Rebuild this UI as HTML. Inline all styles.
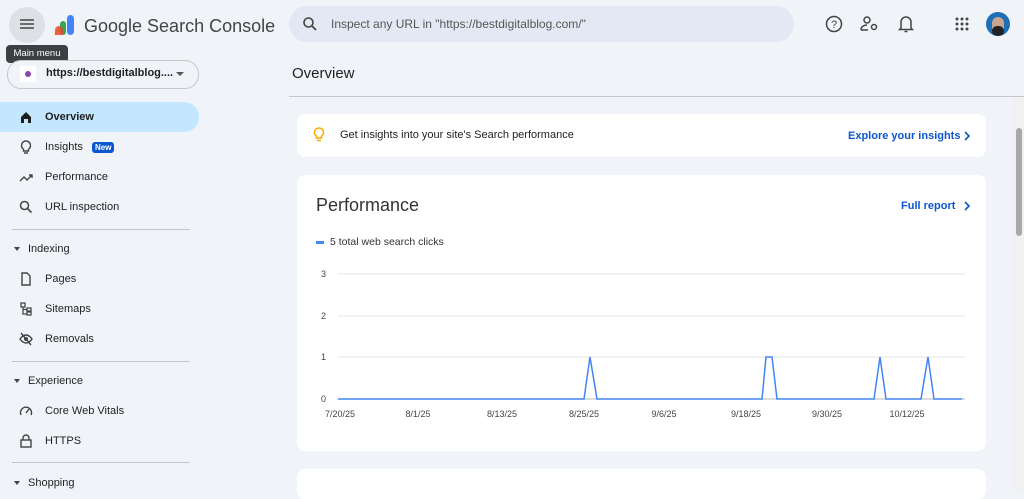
<!DOCTYPE html><html><head><style>
body{margin:0;width:1024px;height:490px;overflow:hidden;background:#f0f4f9;font-family:"Liberation Sans",sans-serif;position:relative;color:#1f1f1f}
.a{position:absolute}
.nav{position:absolute;left:0;width:199px;height:30px;font-size:11px;display:flex;align-items:center}
.nav span.t{position:absolute;left:45px}
.nav svg{position:absolute;left:19px}
.sec{position:absolute;left:14px;font-size:11px;display:flex;align-items:center}
.hr{position:absolute;left:12px;width:178px;height:1px;background:#c4c7c5}
.card{position:absolute;background:#fff;border-radius:8px}
</style></head><body>
<div class="a" style="left:9px;top:7px;width:36px;height:36px;border-radius:50%;background:#dde1e6"></div>
<svg class="a" style="left:19px;top:18px" width="16" height="12"><path d="M1 2h14M1 6h14M1 10h14" stroke="#444" stroke-width="1.6"/></svg>
<svg class="a" style="left:52px;top:13px" width="26" height="24"><path d="M2 22 L6 14 L12 18 Z" fill="#fbbc04"/><rect x="8" y="8" width="6" height="14" rx="3" fill="#34a853"/><rect x="15" y="2" width="7" height="20" rx="3.5" fill="#4285f4"/><path d="M3 17a4 4 0 0 1 8 0v5H3z" fill="#ea4335" opacity=".8"/></svg>
<div class="a" style="left:84px;top:16px;font-size:18px;color:#444">Google Search Console</div>
<div class="a" style="left:6px;top:45px;width:62px;height:18px;background:#3c4043;border-radius:4px;color:#fff;font-size:9.5px;line-height:18px;text-align:center">Main menu</div>
<div class="a" style="left:7px;top:60px;width:190px;height:27px;border:1px solid #c4c7c5;border-radius:14px;background:#f0f4f9"></div>
<div class="a" style="left:20px;top:66px;width:16px;height:16px;background:#fff"></div>
<div class="a" style="left:25px;top:71px;width:6px;height:6px;border-radius:50%;background:#8e44ad"></div>
<div class="a" style="left:46px;top:67px;font-size:11px;font-weight:bold;color:#1f1f1f">https://bestdigitalblog....</div>
<div class="a" style="left:176px;top:72px;border:4px solid transparent;border-top:4px solid #555;border-bottom:0"></div>
<div class="a" style="left:289px;top:6px;width:505px;height:36px;border-radius:18px;background:#e3e9f4"></div>
<svg class="a" style="left:302px;top:16px" width="16" height="16"><circle cx="6.5" cy="6.5" r="4.5" stroke="#444" stroke-width="1.6" fill="none"/><path d="M10 10l4 4" stroke="#444" stroke-width="1.8"/></svg>
<div class="a" style="left:331px;top:17px;font-size:12px;color:#555">Inspect any URL in "https://bestdigitalblog.com/"</div>
<svg class="a" style="left:825px;top:15px" width="18" height="18"><circle cx="9" cy="9" r="7.5" stroke="#444" stroke-width="1.5" fill="none"/><text x="9" y="13" font-size="11" text-anchor="middle" fill="#444" font-family="Liberation Sans">?</text></svg>
<svg class="a" style="left:860px;top:15px" width="20" height="18"><circle cx="7" cy="5" r="3" stroke="#444" stroke-width="1.5" fill="none"/><path d="M1 15c0-4 4-5 6-5" stroke="#444" stroke-width="1.5" fill="none"/><path d="M1 15h7" stroke="#444" stroke-width="1.5"/><circle cx="14" cy="12" r="2.5" stroke="#444" stroke-width="1.5" fill="none"/></svg>
<svg class="a" style="left:898px;top:14px" width="16" height="20"><path d="M3 14V8a5 5 0 0 1 10 0v6l1.5 1.5h-13z" stroke="#444" stroke-width="1.5" fill="none"/><path d="M6.5 17.5h3" stroke="#444" stroke-width="1.5"/></svg>
<svg class="a" style="left:955px;top:17px" width="14" height="14"><g fill="#444"><circle cx="2" cy="2" r="1.5"/><circle cx="7" cy="2" r="1.5"/><circle cx="12" cy="2" r="1.5"/><circle cx="2" cy="7" r="1.5"/><circle cx="7" cy="7" r="1.5"/><circle cx="12" cy="7" r="1.5"/><circle cx="2" cy="12" r="1.5"/><circle cx="7" cy="12" r="1.5"/><circle cx="12" cy="12" r="1.5"/></g></svg>
<div class="a" style="left:986px;top:12px;width:24px;height:24px;border-radius:50%;background:#1d6fb8;overflow:hidden"><div class="a" style="left:6px;top:5px;width:12px;height:16px;border-radius:6px;background:#c9a48f"></div><div class="a" style="left:6px;top:14px;width:12px;height:10px;border-radius:5px;background:#222"></div></div>

<div class="a" style="left:0;top:102px;width:199px;height:30px;background:#c2e7ff;border-radius:0 15px 15px 0"></div>
<div class="nav" style="top:102px"><svg width="14" height="14"><path d="M2 7L7 2l5 5v6H9V9H5v4H2z" fill="#1f1f1f"/></svg><span class="t" style="font-weight:bold">Overview</span></div>
<div class="nav" style="top:132px"><svg width="14" height="14"><path d="M7 1a4.5 4.5 0 0 0-2.5 8.2V11h5V9.2A4.5 4.5 0 0 0 7 1zM5 13h4" stroke="#444" stroke-width="1.4" fill="none"/></svg><span class="t">Insights</span><span class="a" style="left:92px;top:10px;background:#0b57d0;color:#fff;font-size:8px;padding:1px 3px;border-radius:3px;font-weight:bold">New</span></div>
<div class="nav" style="top:162px"><svg width="14" height="14"><path d="M1 11l4-4 3 3 5-5M10 5h3v3" stroke="#444" stroke-width="1.4" fill="none"/></svg><span class="t">Performance</span></div>
<div class="nav" style="top:192px"><svg width="14" height="14"><circle cx="5.5" cy="5.5" r="4" stroke="#444" stroke-width="1.5" fill="none"/><path d="M8.5 8.5l4 4" stroke="#444" stroke-width="1.6"/></svg><span class="t">URL inspection</span></div>
<div class="hr" style="top:229px"></div>
<div class="sec" style="top:243px"><span style="border:3.5px solid transparent;border-top:4px solid #444;border-bottom:0;margin-right:8px"></span>Indexing</div>
<div class="nav" style="top:264px"><svg width="14" height="14"><path d="M3 1h5l3 3v9H3z" stroke="#444" stroke-width="1.4" fill="none"/></svg><span class="t">Pages</span></div>
<div class="nav" style="top:294px"><svg width="14" height="14"><path d="M2 1h4v4H2zM8 6h4v3H8zM8 10h4v3H8zM4 5v7h4M4 7.5h4" stroke="#444" stroke-width="1.3" fill="none"/></svg><span class="t">Sitemaps</span></div>
<div class="nav" style="top:324px"><svg width="14" height="14"><path d="M1 7s2.5-4 6-4 6 4 6 4-2.5 4-6 4-6-4-6-4z" stroke="#444" stroke-width="1.4" fill="none"/><circle cx="7" cy="7" r="2" fill="#444"/><path d="M2 1l10 12" stroke="#444" stroke-width="1.4"/></svg><span class="t">Removals</span></div>
<div class="hr" style="top:361px"></div>
<div class="sec" style="top:375px"><span style="border:3.5px solid transparent;border-top:4px solid #444;border-bottom:0;margin-right:8px"></span>Experience</div>
<div class="nav" style="top:396px"><svg width="14" height="14"><path d="M2 11a5.5 5.5 0 1 1 10 0" stroke="#444" stroke-width="1.4" fill="none"/><path d="M7 9l3-4" stroke="#444" stroke-width="1.4"/></svg><span class="t">Core Web Vitals</span></div>
<div class="nav" style="top:426px"><svg width="14" height="14"><rect x="2" y="6" width="10" height="7" stroke="#444" stroke-width="1.4" fill="none"/><path d="M4 6V4a3 3 0 0 1 6 0v2" stroke="#444" stroke-width="1.4" fill="none"/></svg><span class="t">HTTPS</span></div>
<div class="hr" style="top:462px"></div>
<div class="sec" style="top:477px"><span style="border:3.5px solid transparent;border-top:4px solid #444;border-bottom:0;margin-right:8px"></span>Shopping</div>

<div class="a" style="left:292px;top:65px;font-size:15px;color:#1f1f1f">Overview</div>
<div class="a" style="left:289px;top:96px;width:735px;height:1px;background:#c4c7c5"></div>
<div class="a" style="left:1014px;top:97px;width:10px;height:393px;background:#f1f1f1"></div>
<div class="a" style="left:1016px;top:128px;width:6px;height:108px;background:#a8a8a8;border-radius:3px"></div>

<div class="card" style="left:297px;top:114px;width:689px;height:43px"></div>
<svg class="a" style="left:313px;top:127px" width="12" height="16"><path d="M6 1a4.5 4.5 0 0 0-2.5 8.2V11h5V9.2A4.5 4.5 0 0 0 6 1zM4 13.5h4" stroke="#f9ab00" stroke-width="1.5" fill="none"/></svg>
<div class="a" style="left:340px;top:129px;font-size:11px">Get insights into your site's Search performance</div>
<div class="a" style="left:848px;top:130px;font-size:11px;color:#0b57d0;font-weight:bold">Explore your insights</div>
<svg class="a" style="left:963px;top:131px" width="8" height="10"><path d="M2 1l4 4-4 4" stroke="#0b57d0" stroke-width="1.6" fill="none"/></svg>

<div class="card" style="left:297px;top:175px;width:689px;height:276px"></div>
<div class="a" style="left:316px;top:195px;font-size:18px;color:#333">Performance</div>
<div class="a" style="left:901px;top:200px;font-size:11px;color:#0b57d0;font-weight:bold">Full report</div>
<svg class="a" style="left:963px;top:201px" width="8" height="10"><path d="M2 1l4 4-4 4" stroke="#0b57d0" stroke-width="1.6" fill="none"/></svg>
<div class="a" style="left:316px;top:241px;width:8px;height:3px;background:#4285f4"></div>
<div class="a" style="left:330px;top:236px;font-size:10.5px;color:#333">5 total web search clicks</div>
<svg class="a" style="left:297px;top:260px" width="689" height="160" font-family="Liberation Sans" font-size="9" fill="#444">
<g stroke="#e6e6e6"><path d="M41 14H668M41 56H668M41 97H668"/></g>
<path d="M41 139H668" stroke="#bbb"/>
<text x="24" y="17">3</text><text x="24" y="59">2</text><text x="24" y="100">1</text><text x="24" y="142">0</text>
<path d="M41 139H287L293 97L300 139H465L469 97L475 97L480 139H577L583 97L589 139H624L631 97L637 139H665" stroke="#4285f4" stroke-width="1.5" fill="none"/>
<g text-anchor="middle"><text x="43" y="157">7/20/25</text><text x="121" y="157">8/1/25</text><text x="205" y="157">8/13/25</text><text x="287" y="157">8/25/25</text><text x="367" y="157">9/6/25</text><text x="449" y="157">9/18/25</text><text x="530" y="157">9/30/25</text><text x="610" y="157">10/12/25</text></g>
</svg>
<div class="card" style="left:297px;top:469px;width:689px;height:30px"></div>
</body></html>
